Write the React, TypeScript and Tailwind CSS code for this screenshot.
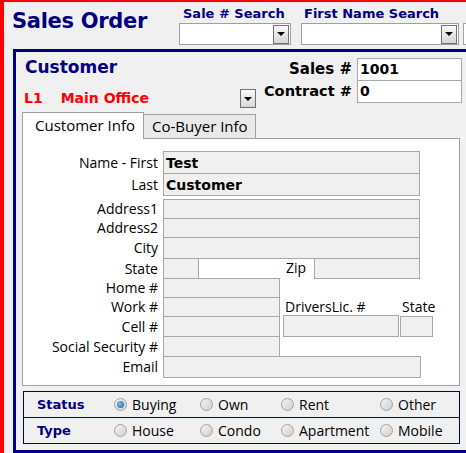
const BOLD = "font-['DejaVu_Sans',Verdana,sans-serif] font-bold";

function DropButton() {
  return (
    <div className="w-[16px] h-[19px] border border-[#707070] bg-gradient-to-b from-[#fafafa] to-[#d6d6d6] flex items-center justify-center shrink-0">
      <div className="w-0 h-0 border-l-[4px] border-r-[4px] border-t-[4px] border-l-transparent border-r-transparent border-t-black" />
    </div>
  );
}

function Combo({ width }: { width: number }) {
  return (
    <div
      className="h-[22px] border border-[#a0a0a0] bg-white flex items-center justify-end pr-px"
      style={{ width }}
    >
      <DropButton />
    </div>
  );
}

function Box({ width, h, bold, children }: { width: number; h: number; bold?: boolean; children?: React.ReactNode }) {
  return (
    <div
      className={`shrink-0 self-start border border-[#a8a8a8] bg-[#f0f0f0] flex items-center pl-[2px] text-[14px] leading-none ${bold ? BOLD : ""}`}
      style={{ width, height: h + 1 }}
    >
      {children}
    </div>
  );
}

function Row({ label, h, children }: { label: string; h: number; children?: React.ReactNode }) {
  return (
    <div className="flex items-start" style={{ height: h }}>
      <div className="w-[140px] pr-[5px] text-right text-[14px] leading-none flex items-center justify-end" style={{ height: h + 1 }}>
        {label}
      </div>
      {children}
    </div>
  );
}

function Radio({ label, checked }: { label: string; checked?: boolean }) {
  return (
    <div className="flex items-center gap-[5px] text-[14px]">
      <div className="w-[13px] h-[13px] rounded-full border border-[#a2a2a2] bg-gradient-to-br from-[#f4f4f4] to-[#cfcfcf] flex items-center justify-center">
        {checked && <div className="w-[7px] h-[7px] rounded-full bg-[radial-gradient(circle_at_40%_40%,#7cc3ea,#135c92)]" />}
      </div>
      <span>{label}</span>
    </div>
  );
}

const STATUS = ["Buying", "Own", "Rent", "Other"];
const TYPE = ["House", "Condo", "Apartment", "Mobile"];

export default function App() {
  return (
    <div className="w-[466px] h-[453px] overflow-hidden bg-[#f0f0f0] border-l-4 border-t-2 border-[#ff0000] font-['Open_Sans',Arial,sans-serif] text-black">
      {/* ── Header ── */}
      <div className="flex h-[47px] w-[800px]">
        <div className={`w-[175px] pl-2 pt-[6px] text-[21px] tracking-[-0.3px] leading-[26px] text-[#000080] ${BOLD}`}>
          Sales Order
        </div>
        <div className="w-[122px] flex flex-col">
          <div className={`pl-1 pt-[4px] h-[21px] text-[13px] leading-[16px] text-[#000080] ${BOLD}`}>Sale # Search</div>
          <Combo width={112} />
        </div>
        <div className="w-[162px] flex flex-col">
          <div className={`pl-[3px] pt-[4px] h-[21px] text-[13px] leading-[16px] text-[#000080] ${BOLD}`}>First Name Search</div>
          <Combo width={158} />
        </div>
        <div className="w-[120px] flex flex-col">
          <div className="h-[21px]" />
          <Combo width={112} />
        </div>
      </div>

      {/* ── Main box ── */}
      <div className="ml-[9px] w-[520px] h-[404px] border-[3px] border-[#000080]">
        <div className="flex h-[59px]">
          <div className="w-[241px] pt-[4px] flex flex-col">
            <div className={`pl-[9px] text-[17px] leading-[22px] text-[#000080] ${BOLD}`}>Customer</div>
            <div className="mt-[11px] h-[19px] flex items-center pr-px">
              <span className={`pl-[8px] text-[14px] text-[#ff0000] ${BOLD}`}>L1</span>
              <span className={`ml-[18px] text-[14px] text-[#ff0000] ${BOLD}`}>Main Office</span>
              <div className="ml-auto">
                <DropButton />
              </div>
            </div>
          </div>
          <div className="pt-[6px] flex flex-col">
            <div className="flex h-[22px]">
              <div className={`w-[95px] text-right text-[15px] leading-[22px] ${BOLD}`}>Sales #</div>
              <div className={`ml-[5px] w-[105px] h-[23px] border border-[#a8a8a8] bg-white pl-[2px] text-[14px] leading-[21px] ${BOLD}`}>1001</div>
            </div>
            <div className="flex h-[22px]">
              <div className={`w-[95px] text-right text-[14.6px] leading-[22px] ${BOLD}`}>Contract #</div>
              <div className={`ml-[5px] w-[105px] h-[23px] border border-[#a8a8a8] bg-white pl-[2px] text-[14px] leading-[21px] ${BOLD}`}>0</div>
            </div>
          </div>
        </div>

        {/* Tabs */}
        <div className="ml-[6px] flex items-end h-[27px]">
          <div className="relative z-10 w-[122px] h-[27px] -mb-px bg-white border border-b-0 border-[#a0a0a0] pl-[12px] pt-[2px] text-[15px] leading-[20px]">
            Customer Info
          </div>
          <div className="w-[112px] h-[24px] bg-[#e9e9e9] border border-l-0 border-b-0 border-[#a0a0a0] pl-[8px] pt-[1px] text-[15px] leading-[20px]">
            Co-Buyer Info
          </div>
        </div>
        <div className="ml-[6px] w-[438px] h-[248px] bg-white border border-[#a0a0a0] pt-[12px]">
          <Row label="Name - First" h={22}><Box width={257} h={22} bold>Test</Box></Row>
          <Row label="Last" h={22}><Box width={257} h={22} bold>Customer</Box></Row>
          <div className="h-[4px]" />
          <Row label="Address1" h={19}><Box width={257} h={19} /></Row>
          <Row label="Address2" h={19}><Box width={257} h={19} /></Row>
          <Row label="City" h={21}><Box width={257} h={21} /></Row>
          <Row label="State" h={20}>
            <Box width={36} h={20} />
            <div className="w-[115px] pr-[8px] text-right text-[14px] leading-[20px]">Zip</div>
            <Box width={106} h={20} />
          </Row>
          <Row label="Home #" h={19}><Box width={117} h={19} /></Row>
          <Row label="Work #" h={19}>
            <Box width={117} h={19} />
            <div className="ml-[5px] w-[117px] text-[14px] leading-[20px]">DriversLic. #</div>
            <div className="text-[14px] leading-[20px]">State</div>
          </Row>
          <Row label="Cell #" h={20}>
            <Box width={117} h={20} />
            <div className="ml-[3px] -mt-px"><Box width={116} h={21} /></div>
            <div className="ml-[1px]"><Box width={33} h={20} /></div>
          </Row>
          <Row label="Social Security #" h={20}><Box width={117} h={20} /></Row>
          <Row label="Email" h={21}><Box width={258} h={21} /></Row>
        </div>

        {/* Status / Type */}
        <div className="ml-[7px] mt-[5px] w-[437px] h-[53px] border border-[#000080] flex flex-col">
          <div className="h-[25px] grid grid-cols-[90px_86px_81px_99px_1fr] items-center">
            <span className={`pl-[13px] text-[13px] text-[#000080] ${BOLD}`}>Status</span>
            {STATUS.map((s, i) => (
              <Radio key={s} label={s} checked={i === 0} />
            ))}
          </div>
          <div className="h-px bg-[#000080]" />
          <div className="h-[25px] grid grid-cols-[90px_86px_81px_99px_1fr] items-center">
            <span className={`pl-[13px] text-[13px] text-[#000080] ${BOLD}`}>Type</span>
            {TYPE.map((s) => (
              <Radio key={s} label={s} />
            ))}
          </div>
        </div>
      </div>
    </div>
  );
}
